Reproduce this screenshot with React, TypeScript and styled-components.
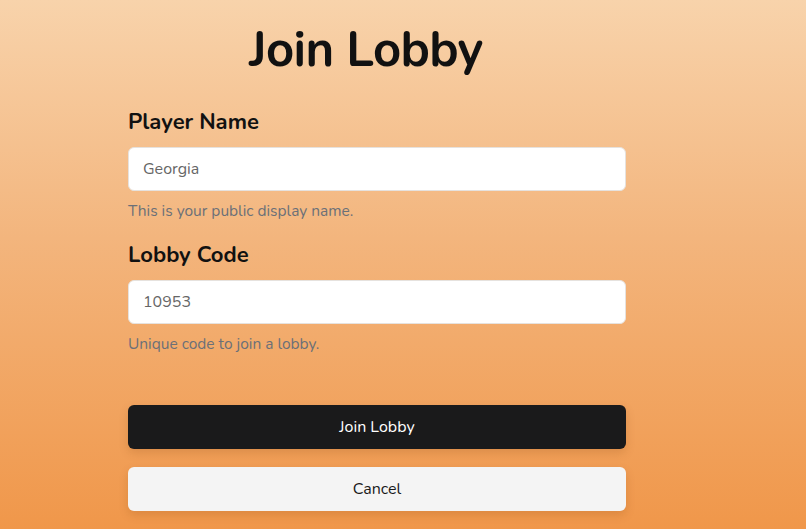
import styled, { createGlobalStyle } from 'styled-components';

const GlobalStyle = createGlobalStyle`
    html, body {
        margin: 0;
        padding: 0;
    }

    body {
        font-family: 'Nunito', Lato, 'Noto Sans', sans-serif;
        background: #f0974a;
    }
`;

function Field({
    label,
    value,
    hint,
}: {
    label: string;
    value: string;
    hint: string;
}) {
    return (
        <FieldGroup>
            <Label>{label}</Label>
            <Input defaultValue={value} />
            <Hint>{hint}</Hint>
        </FieldGroup>
    );
}

function App() {
    return (
        <Page>
            <GlobalStyle />
            <Form>
                <Title>Join Lobby</Title>
                <Field
                    label="Player Name"
                    value="Georgia"
                    hint="This is your public display name."
                />
                <Field
                    label="Lobby Code"
                    value="10953"
                    hint="Unique code to join a lobby."
                />
                <Actions>
                    <Button variant="primary">Join Lobby</Button>
                    <Button variant="secondary">Cancel</Button>
                </Actions>
            </Form>
        </Page>
    );
}

export default App;

const Page = styled.div`
    min-height: 529px;
    background: linear-gradient(180deg, #f8d3ab 0%, #f3b57d 45%, #f0974a 100%);
    padding: 18px 0 0 128px;
    box-sizing: border-box;
`;

const Form = styled.div`
    width: 498px;
    display: flex;
    flex-direction: column;
`;

const Title = styled.h1`
    margin: 0 22px 25px 0;
    text-align: center;
    font-size: 49px;
    font-weight: 700;
    line-height: 64px;
    color: #111;
    letter-spacing: -0.6px;
`;

const FieldGroup = styled.div`
    display: flex;
    flex-direction: column;
    margin-bottom: 19px;
`;

const Label = styled.label`
    font-size: 22px;
    font-weight: 700;
    color: #111;
    line-height: 30px;
    margin-bottom: 10px;
`;

const Input = styled.input`
    height: 44px;
    box-sizing: border-box;
    border: 1px solid #e6e2de;
    border-radius: 6px;
    background: #fff;
    padding: 0 14px;
    font-family: inherit;
    font-size: 16px;
    color: #666;
    outline: none;
`;

const Hint = styled.p`
    margin: 10px 0 0;
    font-size: 15.5px;
    line-height: 20px;
    color: #6b7078;
`;

const Actions = styled.div`
    display: flex;
    flex-direction: column;
    gap: 18px;
    margin-top: 32px;
`;

const Button = styled.button<{ variant: 'primary' | 'secondary' }>`
    height: 44px;
    border: none;
    border-radius: 6px;
    font-family: inherit;
    font-size: 16px;
    background: ${(p) => (p.variant === 'primary' ? '#1a1a1b' : '#f4f4f4')};
    color: ${(p) => (p.variant === 'primary' ? '#fff' : '#1a1a1a')};
    box-shadow: 0 4px 10px rgba(120, 60, 10, 0.18);
    cursor: pointer;
`;
